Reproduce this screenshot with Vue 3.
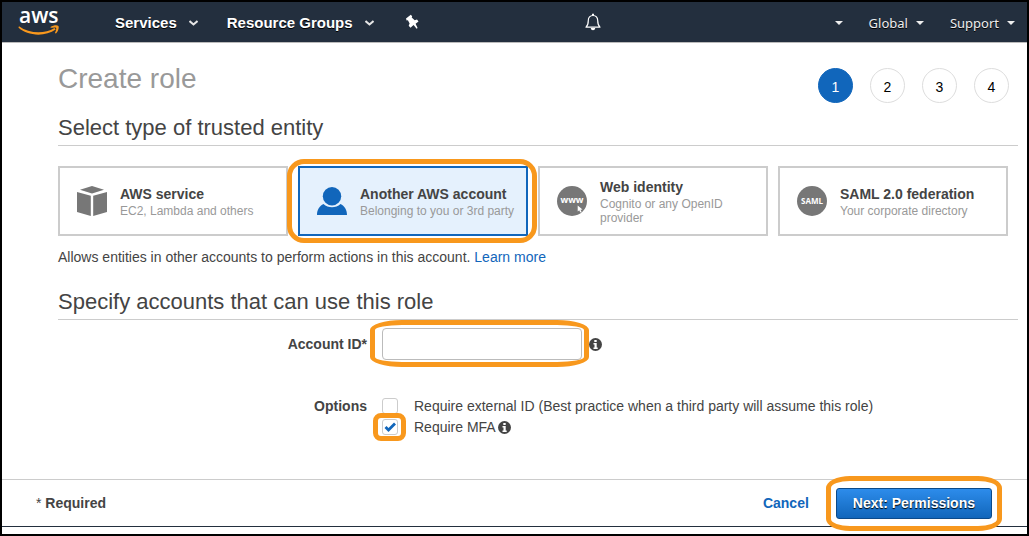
<script setup>
import { ref } from 'vue'

const steps = [1, 2, 3, 4]
const current = 1
const selected = ref('account')
const accountId = ref('')
const externalId = ref(false)
const mfa = ref(true)

const entities = [
  { id: 'service', title: 'AWS service', text: 'EC2, Lambda and others' },
  { id: 'account', title: 'Another AWS account', text: 'Belonging to you or 3rd party' },
  { id: 'web', title: 'Web identity', text: 'Cognito or any OpenID provider' },
  { id: 'saml', title: 'SAML 2.0 federation', text: 'Your corporate directory' }
]
</script>

<template>
  <div class="page">
    <header class="topbar">
      <a class="logo" href="#" aria-label="aws">
        <svg width="44" height="44" viewBox="0 -3 44 44">
          <text x="1" y="20" class="logo-text">aws</text>
          <path d="M1 23.200C11 30.500 26 31.500 36.500 25l1.200 1.600C27 34.200 9 33 .4 24.600z" fill="#f8981d" />
          <path d="M32.500 24c2.500-1.600 6.500-2.200 7.900-1.100.9 1.300-.2 5.700-2.500 7.700l-1-.5c1-2.200 1.700-4.500 1.200-5.300-.6-.7-3.200-.3-5.400 0z" fill="#f8981d" />
        </svg>
      </a>
      <nav class="menu">
        <button type="button" class="menu-item">
          Services
          <svg width="9" height="6" viewBox="0 0 9 6"><path d="M.5 1l4 3.500 4-3.500" fill="none" stroke="#e6e6e6" stroke-width="2" /></svg>
        </button>
        <button type="button" class="menu-item">
          Resource Groups
          <svg width="9" height="6" viewBox="0 0 9 6"><path d="M.5 1l4 3.500 4-3.500" fill="none" stroke="#e6e6e6" stroke-width="2" /></svg>
        </button>
        <button type="button" class="icon-button pin" aria-label="Pin">
          <svg width="14" height="16" viewBox="0 0 14 16">
            <path d="M1 4.500L5.800.8l1.400 1.400-.5 1.300 3 2.700 2.300-.6 1.500 1.900-2.900 2.300 2 4.300-1 .6-3-3.700-3.100 2.700-1.800-2 .9-2.200-1.700-3.200-1.300.1z" fill="#fff" />
          </svg>
        </button>
      </nav>
      <div class="account-menu">
        <button type="button" class="icon-button bell" aria-label="Notifications">
          <svg width="16" height="18" viewBox="0 0 16 18">
            <path d="M1 14.200c1.800-1.600 2.300-3.200 2.300-6.600C3.300 4.500 5 2.500 8 2.500s4.700 2 4.700 5.100c0 3.400.5 5 2.300 6.600z" fill="none" stroke="#fff" stroke-width="1.200" stroke-linejoin="round" />
            <path d="M7 .7h2v2H7zM5.700 15h4.600c-.3 1.500-1.100 2.200-2.300 2.200S6 16.500 5.700 15z" fill="#fff" />
          </svg>
        </button>
        <button type="button" class="small-item" aria-label="Account"><span class="caret"></span></button>
        <button type="button" class="small-item">Global<span class="caret"></span></button>
        <button type="button" class="small-item">Support<span class="caret"></span></button>
      </div>
    </header>

    <main class="content">
      <div class="heading">
        <h1>Create role</h1>
        <ol class="steps">
          <li v-for="n in steps" :key="n" :class="{ active: n === current }">{{ n }}</li>
        </ol>
      </div>

      <h2>Select type of trusted entity</h2>
      <div class="cards">
        <button
          v-for="e in entities"
          :key="e.id"
          type="button"
          class="card"
          :class="{ selected: selected === e.id }"
          :aria-pressed="selected === e.id"
          @click="selected = e.id"
        >
          <svg class="card-icon" width="30" height="30" viewBox="0 0 30 30">
            <g v-if="e.id === 'service'" fill="#777">
              <path d="M15 0L27 3.700 15 7.600 3 3.700z" />
              <path d="M0 6l13.800 3.700V30L0 26zM30 6L16.200 9.700V30L30 26z" />
            </g>
            <g v-else-if="e.id === 'account'" fill="#1166bb">
              <circle cx="15" cy="10.200" r="9.200" />
              <path d="M0 29c0-5.500 2.500-9 6.500-11 4.600 4.400 12.400 4.400 17 0 4 2 6.500 5.500 6.500 11z" />
            </g>
            <g v-else-if="e.id === 'web'">
              <circle cx="15" cy="15" r="15" fill="#777" />
              <text x="15" y="17" class="badge-text web-text">www</text>
              <path d="M20.700 19.500v6l1.500-1.200 1.100 2.300 1.300-.6-1.100-2.200 2-.2z" fill="#fff" />
            </g>
            <g v-else>
              <circle cx="15" cy="15" r="15" fill="#777" />
              <text x="15" y="18" class="badge-text">SAML</text>
            </g>
          </svg>
          <span class="card-body">
            <strong>{{ e.title }}</strong>
            <span>{{ e.text }}</span>
          </span>
          <span v-if="e.id === 'account'" class="ring card-ring"></span>
        </button>
      </div>
      <p class="hint">Allows entities in other accounts to perform actions in this account. <a href="#">Learn more</a></p>

      <h2>Specify accounts that can use this role</h2>
      <div class="form-row">
        <label class="form-label" for="account-id">Account ID*</label>
        <div class="field">
          <span class="marked">
            <input id="account-id" v-model="accountId" class="text-input" type="text" />
            <span class="ring input-ring"></span>
          </span>
          <svg class="info input-info" width="13" height="13" viewBox="0 0 13 13">
            <circle cx="6.500" cy="6.500" r="6.500" fill="#444" />
            <path d="M5.300 2h2.400v2H5.300zM4.500 5h3.200v4.500h1V11H4.500V9.500h1V6.500h-1z" fill="#fff" />
          </svg>
        </div>
      </div>
      <div class="form-row options" role="group" aria-labelledby="options-label">
        <span id="options-label" class="form-label">Options</span>
        <div>
          <div class="option">
            <input id="external-id" v-model="externalId" type="checkbox" />
            <label for="external-id">Require external ID (Best practice when a third party will assume this role)</label>
          </div>
          <div class="option">
            <span class="marked">
              <input id="mfa" v-model="mfa" type="checkbox" />
              <svg v-if="mfa" class="tick" width="16" height="16" viewBox="0 0 16 16"><path d="M3.500 8l3 3L13 4.500" fill="none" stroke="#1166bb" stroke-width="2.800" /></svg>
              <span class="ring check-ring"></span>
            </span>
            <label for="mfa">Require MFA</label>
            <svg class="info option-info" width="13" height="13" viewBox="0 0 13 13">
              <circle cx="6.500" cy="6.500" r="6.500" fill="#444" />
              <path d="M5.300 2h2.400v2H5.300zM4.500 5h3.200v4.500h1V11H4.500V9.500h1V6.500h-1z" fill="#fff" />
            </svg>
          </div>
        </div>
      </div>
    </main>

    <footer class="footer">
      <span class="required"><span class="star">*</span> Required</span>
      <div class="actions">
        <a class="cancel" href="#">Cancel</a>
        <span class="marked">
          <button type="button" class="primary">Next: Permissions</button>
          <span class="ring button-ring"></span>
        </span>
      </div>
    </footer>
  </div>
</template>

<style>
body {
  margin: 0;
}
</style>

<style scoped>
* {
  box-sizing: border-box;
}
.page {
  display: flex;
  flex-direction: column;
  min-height: 100vh;
  padding-bottom: 7px;
  border: 2px solid #000;
  background: #fff;
  color: #444;
  font: 14px/20px "Liberation Sans", Arial, sans-serif;
}
button {
  padding: 0;
  border: 0;
  background: none;
  color: inherit;
  font: inherit;
  cursor: pointer;
}
a {
  color: #1166bb;
  text-decoration: none;
}
.topbar {
  display: flex;
  align-items: center;
  height: 41px;
  padding: 0 12px 0 16px;
  border-bottom: 1px solid #bbb;
  background: #232f3e;
  color: #fff;
}
.logo {
  height: 44px;
}
.logo-text {
  fill: #fff;
  font: 600 21px "Open Sans", sans-serif;
}
.menu {
  display: flex;
  align-items: center;
  gap: 29px;
  margin-left: 53px;
}
.menu-item {
  display: flex;
  align-items: center;
  gap: 12px;
  padding-top: 1px;
  font-size: 15px;
  font-weight: bold;
  line-height: 22px;
  text-shadow: 0 1px 0 #000;
}
.icon-button {
  display: flex;
}
.pin {
  margin-left: 2px;
}
.account-menu {
  display: flex;
  align-items: center;
  gap: 26px;
  margin-left: auto;
}
.bell {
  margin-right: 208px;
}
.small-item {
  display: flex;
  align-items: center;
  gap: 8px;
  padding-top: 2px;
  color: #eee;
  font: 13px/20px "Noto Sans", sans-serif;
  text-shadow: 0 1px 0 #000;
}
.caret {
  border: 4px solid transparent;
  border-top-color: #eee;
  border-bottom: 0;
}
.content {
  flex: 1;
  padding: 16px 9px 20px 56px;
}
.heading {
  display: flex;
  justify-content: space-between;
  padding-right: 9px;
}
h1 {
  margin: 0;
  color: #999;
  font-size: 28px;
  font-weight: normal;
  line-height: 40px;
}
.steps {
  display: flex;
  gap: 17px;
  margin: 9px 0 0;
  padding: 0;
  list-style: none;
}
.steps li {
  width: 35px;
  height: 35px;
  border: 1px solid #ddd;
  border-radius: 50%;
  color: #000;
  line-height: 37px;
  text-align: center;
}
.steps .active {
  border-color: #1166bb;
  background: #1166bb;
  color: #fff;
}
h2 {
  margin: 8px 0 0;
  border-bottom: 1px solid #ccc;
  font-size: 22px;
  font-weight: normal;
  line-height: 34px;
}
.cards {
  display: grid;
  grid-template-columns: repeat(4, 1fr);
  gap: 10px;
  margin: 20px 10px 0 0;
}
.card {
  position: relative;
  display: flex;
  align-items: center;
  gap: 13px;
  min-height: 70px;
  padding: 0 10px 0 17px;
  border: 2px solid #ccc;
  background: #fff;
  text-align: left;
}
.card.selected {
  border-color: #1166bb;
  background: #e5f1fd;
}
.card-icon {
  flex: none;
}
.card-body {
  display: flex;
  flex-direction: column;
  color: #999;
  font-size: 12px;
  line-height: 14px;
}
.card-body strong {
  color: #444;
  font-size: 14px;
  line-height: 20px;
}
.badge-text {
  fill: #fff;
  font: bold 8px "Open Sans", sans-serif;
  text-anchor: middle;
}
.web-text {
  font-size: 9px;
}
.hint {
  margin: 11px 0 18px;
}
.form-row {
  display: grid;
  grid-template-columns: 309px 1fr;
  gap: 15px;
  align-items: center;
  margin-top: 8px;
}
.form-label {
  font-weight: bold;
  text-align: right;
}
.options {
  align-items: start;
  margin-top: 36px;
}
.field,
.option {
  display: flex;
  align-items: center;
}
.option {
  height: 21px;
  padding-bottom: 1px;
}
.option label {
  margin-left: 16px;
}
.marked {
  position: relative;
  display: flex;
}
.text-input {
  width: 200px;
  height: 32px;
  padding: 0 8px;
  border: 1px solid #bbb;
  border-radius: 4px;
  font: inherit;
}
.input-info {
  margin-left: 7px;
}
.option-info {
  margin-left: 2px;
}
.info {
  flex: none;
}
input[type="checkbox"] {
  appearance: none;
  width: 16px;
  height: 16px;
  margin: 0;
  border: 1px solid #ccc;
  border-radius: 3px;
  background: #fff;
}
.tick {
  position: absolute;
  inset: 0;
  pointer-events: none;
}
.ring {
  position: absolute;
  z-index: 1;
  border: 5px solid #f8981d;
  pointer-events: none;
}
.card-ring {
  inset: -9px -11px -9px -13px;
  border-radius: 17px;
}
.input-ring {
  inset: -8px -7px -7px -12px;
  border-radius: 32px / 10px;
}
.check-ring {
  inset: -6px -8px -6px -9px;
  border-radius: 8px;
}
.button-ring {
  inset: -12px -10px;
  border-radius: 24px / 12px;
}
.footer {
  display: flex;
  align-items: center;
  justify-content: space-between;
  height: 48px;
  padding: 0 35px 0 34px;
  border-top: 1px solid #ccc;
  border-bottom: 1px solid #232f3e;
  font-weight: bold;
}
.star {
  font-weight: normal;
}
.actions {
  display: flex;
  align-items: center;
  gap: 27px;
}
.primary {
  height: 31px;
  padding: 0 16px;
  border: 1px solid #0b4a8b;
  border-radius: 3px;
  background: linear-gradient(#2d8ceb, #1166bb);
  color: #fff;
  font-weight: bold;
  text-shadow: 0 1px 1px #000;
}
</style>
